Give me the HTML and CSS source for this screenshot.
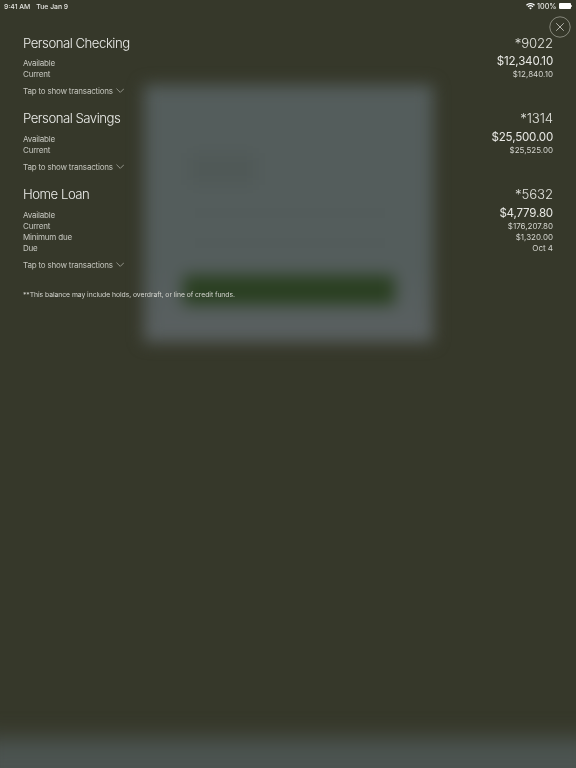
FILE: index.html
```html
<!DOCTYPE html>
<html lang="en">
<head>
<meta charset="utf-8">
<title>Accounts</title>
<link rel="stylesheet" href="styles.css">
</head>
<body>
<div class="backdrop" aria-hidden="true">
  <div class="sheet">
    <div class="ghost g1"></div>
    <div class="ghost g3"></div>
    <div class="ghost g4"></div>
    <div class="ghost-btn"></div>
  </div>
  <div class="tabbar"></div>
</div>
<main class="page">
  <header class="status">
    <div class="status-left"><span>9:41 AM</span><span>Tue Jan 9</span></div>
    <div class="status-right">
      <svg class="wifi" viewBox="0 0 12 9" width="9" height="7"><path d="M6 8.6 4.2 6.6a2.6 2.6 0 0 1 3.6 0zM3.2 5.6 2.1 4.4a5.6 5.6 0 0 1 7.8 0L8.8 5.6a4 4 0 0 0-5.6 0zM1.2 3.5 0 2.3a8.5 8.5 0 0 1 12 0l-1.2 1.2a6.9 6.9 0 0 0-9.6 0z" fill="#fff"/></svg>
      <span>100%</span>
      <span class="battery"></span>
    </div>
  </header>
  <button class="close" aria-label="Close">
    <svg viewBox="0 0 22 22" width="22" height="22"><circle cx="11" cy="11" r="10.2" fill="none" stroke="#a9ab9f" stroke-width=".7"/><path d="M7.2 7.2l7.6 7.6M14.8 7.2l-7.6 7.6" fill="none" stroke="#d0d1ca" stroke-width=".8"/></svg>
  </button>
  <section class="account">
    <div class="row head"><span>Personal Checking</span><span class="acct">*9022</span></div>
    <div class="row main"><span class="label">Available</span><span class="big">$12,340.10</span></div>
    <div class="row"><span class="label">Current</span><span>$12,840.10</span></div>
    <div class="tap">Tap to show transactions <svg viewBox="0 0 9 5" width="8.5" height="5"><path d="M.5.5l4 4 4-4" fill="none" stroke="#c4c5bd" stroke-width=".7"/></svg></div>
  </section>
  <section class="account">
    <div class="row head"><span>Personal Savings</span><span class="acct">*1314</span></div>
    <div class="row main"><span class="label">Available</span><span class="big">$25,500.00</span></div>
    <div class="row"><span class="label">Current</span><span>$25,525.00</span></div>
    <div class="tap">Tap to show transactions <svg viewBox="0 0 9 5" width="8.5" height="5"><path d="M.5.5l4 4 4-4" fill="none" stroke="#c4c5bd" stroke-width=".7"/></svg></div>
  </section>
  <section class="account">
    <div class="row head"><span>Home Loan</span><span class="acct">*5632</span></div>
    <div class="row main"><span class="label">Available</span><span class="big">$4,779.80</span></div>
    <div class="row"><span class="label">Current</span><span>$176,207.80</span></div>
    <div class="row"><span class="label">Minimum due</span><span>$1,320.00</span></div>
    <div class="row"><span class="label">Due</span><span>Oct 4</span></div>
    <div class="tap">Tap to show transactions <svg viewBox="0 0 9 5" width="8.5" height="5"><path d="M.5.5l4 4 4-4" fill="none" stroke="#c4c5bd" stroke-width=".7"/></svg></div>
  </section>
  <p class="note">**This balance may include holds, overdraft, or line of credit funds.</p>
</main>
</body>
</html>
```
FILE: styles.css
```css
* { box-sizing: border-box; }
html, body { margin: 0; height: 100%; }
body {
  width: 576px;
  height: 768px;
  overflow: hidden;
  background: #36382a;
  color: #d4d5cf;
  font-family: "Inter", "Liberation Sans", sans-serif;
  position: relative;
}
.backdrop { position: absolute; inset: 0; overflow: hidden; }
.sheet {
  position: absolute;
  left: 144px; top: 85px;
  width: 289px; height: 257px;
  background: linear-gradient(#545d5c 70%, #5a6061);
  filter: blur(8px);
}
.ghost { position: absolute; background: #505957; }
.g1 { left: 46px; top: 68px; width: 66px; height: 32px; }
.g3 { left: 46px; top: 125px; width: 200px; height: 6px; background: #525b5a; }
.g4 { left: 46px; top: 155px; width: 200px; height: 6px; background: #525b5a; }
.ghost-btn {
  position: absolute;
  left: 39px; top: 190px;
  width: 212px; height: 30px;
  background: #2a3f21;
  border-radius: 3px;
}
.tabbar {
  position: absolute;
  left: -20px; right: -20px; bottom: -22px;
  height: 52px;
  background: #4c5451;
  filter: blur(11px);
}
.page { position: relative; padding: 0 23px; filter: blur(.25px); }
.status {
  display: flex;
  justify-content: space-between;
  align-items: center;
  height: 12px;
  margin: 0 -19px;
  font-size: 6.8px;
  font-weight: 500;
  color: #e6e6e2;
}
.status-left { display: flex; gap: 6px; }
.status-right { display: flex; align-items: center; gap: 2.5px; font-size: 7.2px; }
.battery {
  position: relative;
  width: 12px; height: 6px;
  margin-right: 1px;
  background: #fff;
  border-radius: 1px;
}
.battery::after {
  content: "";
  position: absolute;
  left: 12.3px; top: 2px;
  width: 1px; height: 2px;
  background: #bdbdb6;
}
.close {
  position: absolute;
  top: 16px; right: 5px;
  width: 22px; height: 22px;
  padding: 0;
  background: none;
  border: 0;
}
.close svg { display: block; }
.account { height: 75.8px; }
.status + .close + .account { margin-top: 21.5px; }
.account:last-of-type { height: 104.6px; }
.row {
  display: flex;
  justify-content: space-between;
  height: 11.1px;
  line-height: 11.1px;
  font-size: 8px;
  font-weight: 400;
}
.label { color: #c7c8c1; letter-spacing: -.2px; }
.row.head {
  height: 18px;
  line-height: 18px;
  font-size: 13.2px;
  font-weight: 300;
  letter-spacing: -.5px;
  color: #ecedea;
  margin-bottom: 6.5px;
}
.row.head .acct { letter-spacing: -.1px; color: #e2e3dd; }
.big { font-size: 11.6px; letter-spacing: -.2px; color: #e8e8e4; position: relative; top: -2px; }
.tap {
  display: flex;
  align-items: center;
  gap: 3px;
  margin-top: 5.2px;
  height: 11px;
  font-size: 8px;
  letter-spacing: -.2px;
  color: #c4c5bd;
}
.note {
  margin: 0;
  font-size: 6.8px;
  letter-spacing: -.05px;
  color: #d4d5cf;
}
```
